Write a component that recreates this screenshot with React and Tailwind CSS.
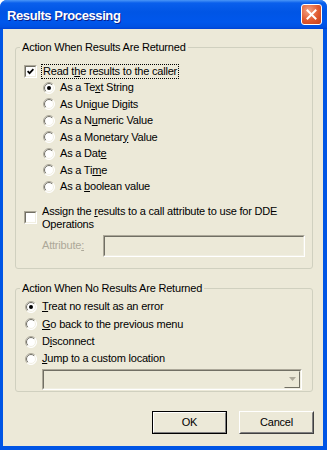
import React from "react";

const Radio = ({ checked }) => (
  <svg width="12" height="12" viewBox="0 0 12 12" className="shrink-0">
    <defs>
      <linearGradient id="rbOuter" x1="0" y1="0" x2="1" y2="1">
        <stop offset="0.48" stopColor="#ACA899" />
        <stop offset="0.52" stopColor="#FFFFFF" />
      </linearGradient>
      <linearGradient id="rbInner" x1="0" y1="0" x2="1" y2="1">
        <stop offset="0.48" stopColor="#716F64" />
        <stop offset="0.52" stopColor="#F1EFE2" />
      </linearGradient>
    </defs>
    <circle cx="6" cy="6" r="5.5" fill="#fff" stroke="url(#rbOuter)" />
    <circle cx="6" cy="6" r="4.5" fill="none" stroke="url(#rbInner)" />
    {checked && <circle cx="6" cy="6" r="2" fill="#000" />}
  </svg>
);

const Check = ({ checked }) => (
  <div className="w-[13px] h-[13px] shrink-0 border border-t-[#ACA899] border-l-[#ACA899] border-r-white border-b-white">
    <div className="w-full h-full border border-t-[#716F64] border-l-[#716F64] border-r-[#F1EFE2] border-b-[#F1EFE2] bg-white flex items-center justify-center">
      {checked && (
        <svg width="7" height="7" viewBox="0 0 7 7">
          <path d="M0.6 3.2 L2.6 5.2 L6.4 1.2" stroke="#000" strokeWidth="1.7" fill="none" />
        </svg>
      )}
    </div>
  </div>
);

const Sunken = ({ className, children }) => (
  <div className={`border border-t-[#ACA899] border-l-[#ACA899] border-r-white border-b-white ${className}`}>
    <div className="w-full h-full border border-t-[#716F64] border-l-[#716F64] border-r-[#F1EFE2] border-b-[#F1EFE2] bg-[#ECE9D8] flex justify-end">
      {children}
    </div>
  </div>
);

const RadioRow = ({ checked, children, className = "h-[16.5px]" }) => (
  <div className={`flex items-center gap-[5px] ${className}`}>
    <Radio checked={checked} />
    <span>{children}</span>
  </div>
);

const GroupBox = ({ title, className, children }) => (
  <fieldset className={`border border-[#D0D0BF] rounded-[3px] ${className}`}>
    <legend className="ml-[4px] px-[2px] leading-[14px]">{title}</legend>
    {children}
  </fieldset>
);

const DialogButton = ({ isDefault, children }) => (
  <div
    className={
      isDefault
        ? "w-[75px] h-[23px] border border-black"
        : "w-[75px] h-[23px] border border-t-white border-l-white border-r-[#404040] border-b-[#404040]"
    }
  >
    <div
      className={
        isDefault
          ? "w-full h-full border border-t-white border-l-white border-r-[#808080] border-b-[#808080] flex items-center justify-center"
          : "w-full h-full border border-t-[#ECE9D8] border-l-[#ECE9D8] border-r-[#808080] border-b-[#808080] flex items-center justify-center"
      }
    >
      {children}
    </div>
  </div>
);

export default function App() {
  return (
    <div className="w-[327px] h-[450px] rounded-t-[7px] bg-[#0055E5] flex flex-col overflow-hidden font-['Liberation_Sans',Arial,sans-serif]">
      {/* Title bar */}
      <div className="h-[29px] shrink-0 flex items-center justify-between pl-[7px] pr-[5px] bg-[linear-gradient(180deg,#4A96F7_0px,#0A5FEC_3px,#0055E5_12px,#0057EC_22px,#0051E2_27px,#0041D4_29px)]">
        <span className="mt-[2px] text-[13px] leading-[13px] font-bold tracking-[-0.4px] text-white [text-shadow:1px_1px_0_#0A1E8A]">
          Results Processing
        </span>
        <div className="w-[21px] h-[21px] rounded-[3px] border border-white bg-[radial-gradient(circle_at_35%_30%,#F3A386,#E0592F_55%,#C43F1B)] flex items-center justify-center">
          <svg width="11" height="11" viewBox="0 0 11 11">
            <path d="M1.5 1.5 L9.5 9.5 M9.5 1.5 L1.5 9.5" stroke="#fff" strokeWidth="2" strokeLinecap="square" />
          </svg>
        </div>
      </div>

      {/* Body */}
      <div className="flex-1 ml-[3px] mr-[4px] mb-[4px] bg-[#ECE9D8] text-[11px] leading-[13px] tracking-[-0.2px] text-black pt-[11px] pl-[12px] pr-[10px] flex flex-col">
        <GroupBox title="Action When Results Are Returned" className="h-[229px]">
          <div className="pl-[8px] pr-[7px]">
            <div className="mt-[8.75px] h-[16.5px] flex items-center gap-[4px]">
              <Check checked />
              <span className="border border-dotted border-black px-[1px] leading-[13px]">
                Read t<u>h</u>e results to the caller
              </span>
            </div>
            <div className="pl-[19px]">
              <RadioRow checked>
                As a Te<u>x</u>t String
              </RadioRow>
              <RadioRow>
                As Uni<u>q</u>ue Digits
              </RadioRow>
              <RadioRow>
                As a N<u>u</u>meric Value
              </RadioRow>
              <RadioRow>
                As a Monetar<u>y</u> Value
              </RadioRow>
              <RadioRow>
                As a Dat<u>e</u>
              </RadioRow>
              <RadioRow>
                As a Ti<u>m</u>e
              </RadioRow>
              <RadioRow>
                As a <u>b</u>oolean value
              </RadioRow>
            </div>
            <div className="mt-[10px] flex items-center gap-[5px]">
              <Check />
              <span className="leading-[13px]">
                Assign the <u>r</u>esults to a call attribute to use for DDE
                <br />
                Operations
              </span>
            </div>
            <div className="mt-[4px] flex items-center pl-[18px] justify-between">
              <span className="text-[#ACA899]">
                Attribute<u>:</u>
              </span>
              <Sunken className="w-[202px] h-[22px]" />
            </div>
          </div>
        </GroupBox>

        <GroupBox title="Action When No Results Are Returned" className="h-[111px] mt-[12px]">
          <div className="pl-[9px] mt-[3.33px]">
            <RadioRow checked className="h-[17.33px]">
              <u>T</u>reat no result as an error
            </RadioRow>
            <RadioRow className="h-[17.33px]">
              <u>G</u>o back to the previous menu
            </RadioRow>
            <RadioRow className="h-[17.33px]">
              D<u>i</u>sconnect
            </RadioRow>
            <RadioRow className="h-[17.33px]">
              <u>J</u>ump to a custom location
            </RadioRow>
            <Sunken className="ml-[17px] mt-[1.33px] w-[260px] h-[21px]">
              <div className="w-[16px] h-full border border-t-[#ECE9D8] border-l-[#ECE9D8] border-r-[#716F64] border-b-[#716F64] bg-[#ECE9D8] flex items-center justify-center">
                <svg width="7" height="4" viewBox="0 0 7 4">
                  <path d="M0 0 H7 L3.5 4 Z" fill="#ACA899" />
                </svg>
              </div>
            </Sunken>
          </div>
        </GroupBox>

        <div className="mt-[19px] -mr-[1px] flex justify-end gap-[12px]">
          <DialogButton isDefault>OK</DialogButton>
          <DialogButton>Cancel</DialogButton>
        </div>
      </div>
    </div>
  );
}
